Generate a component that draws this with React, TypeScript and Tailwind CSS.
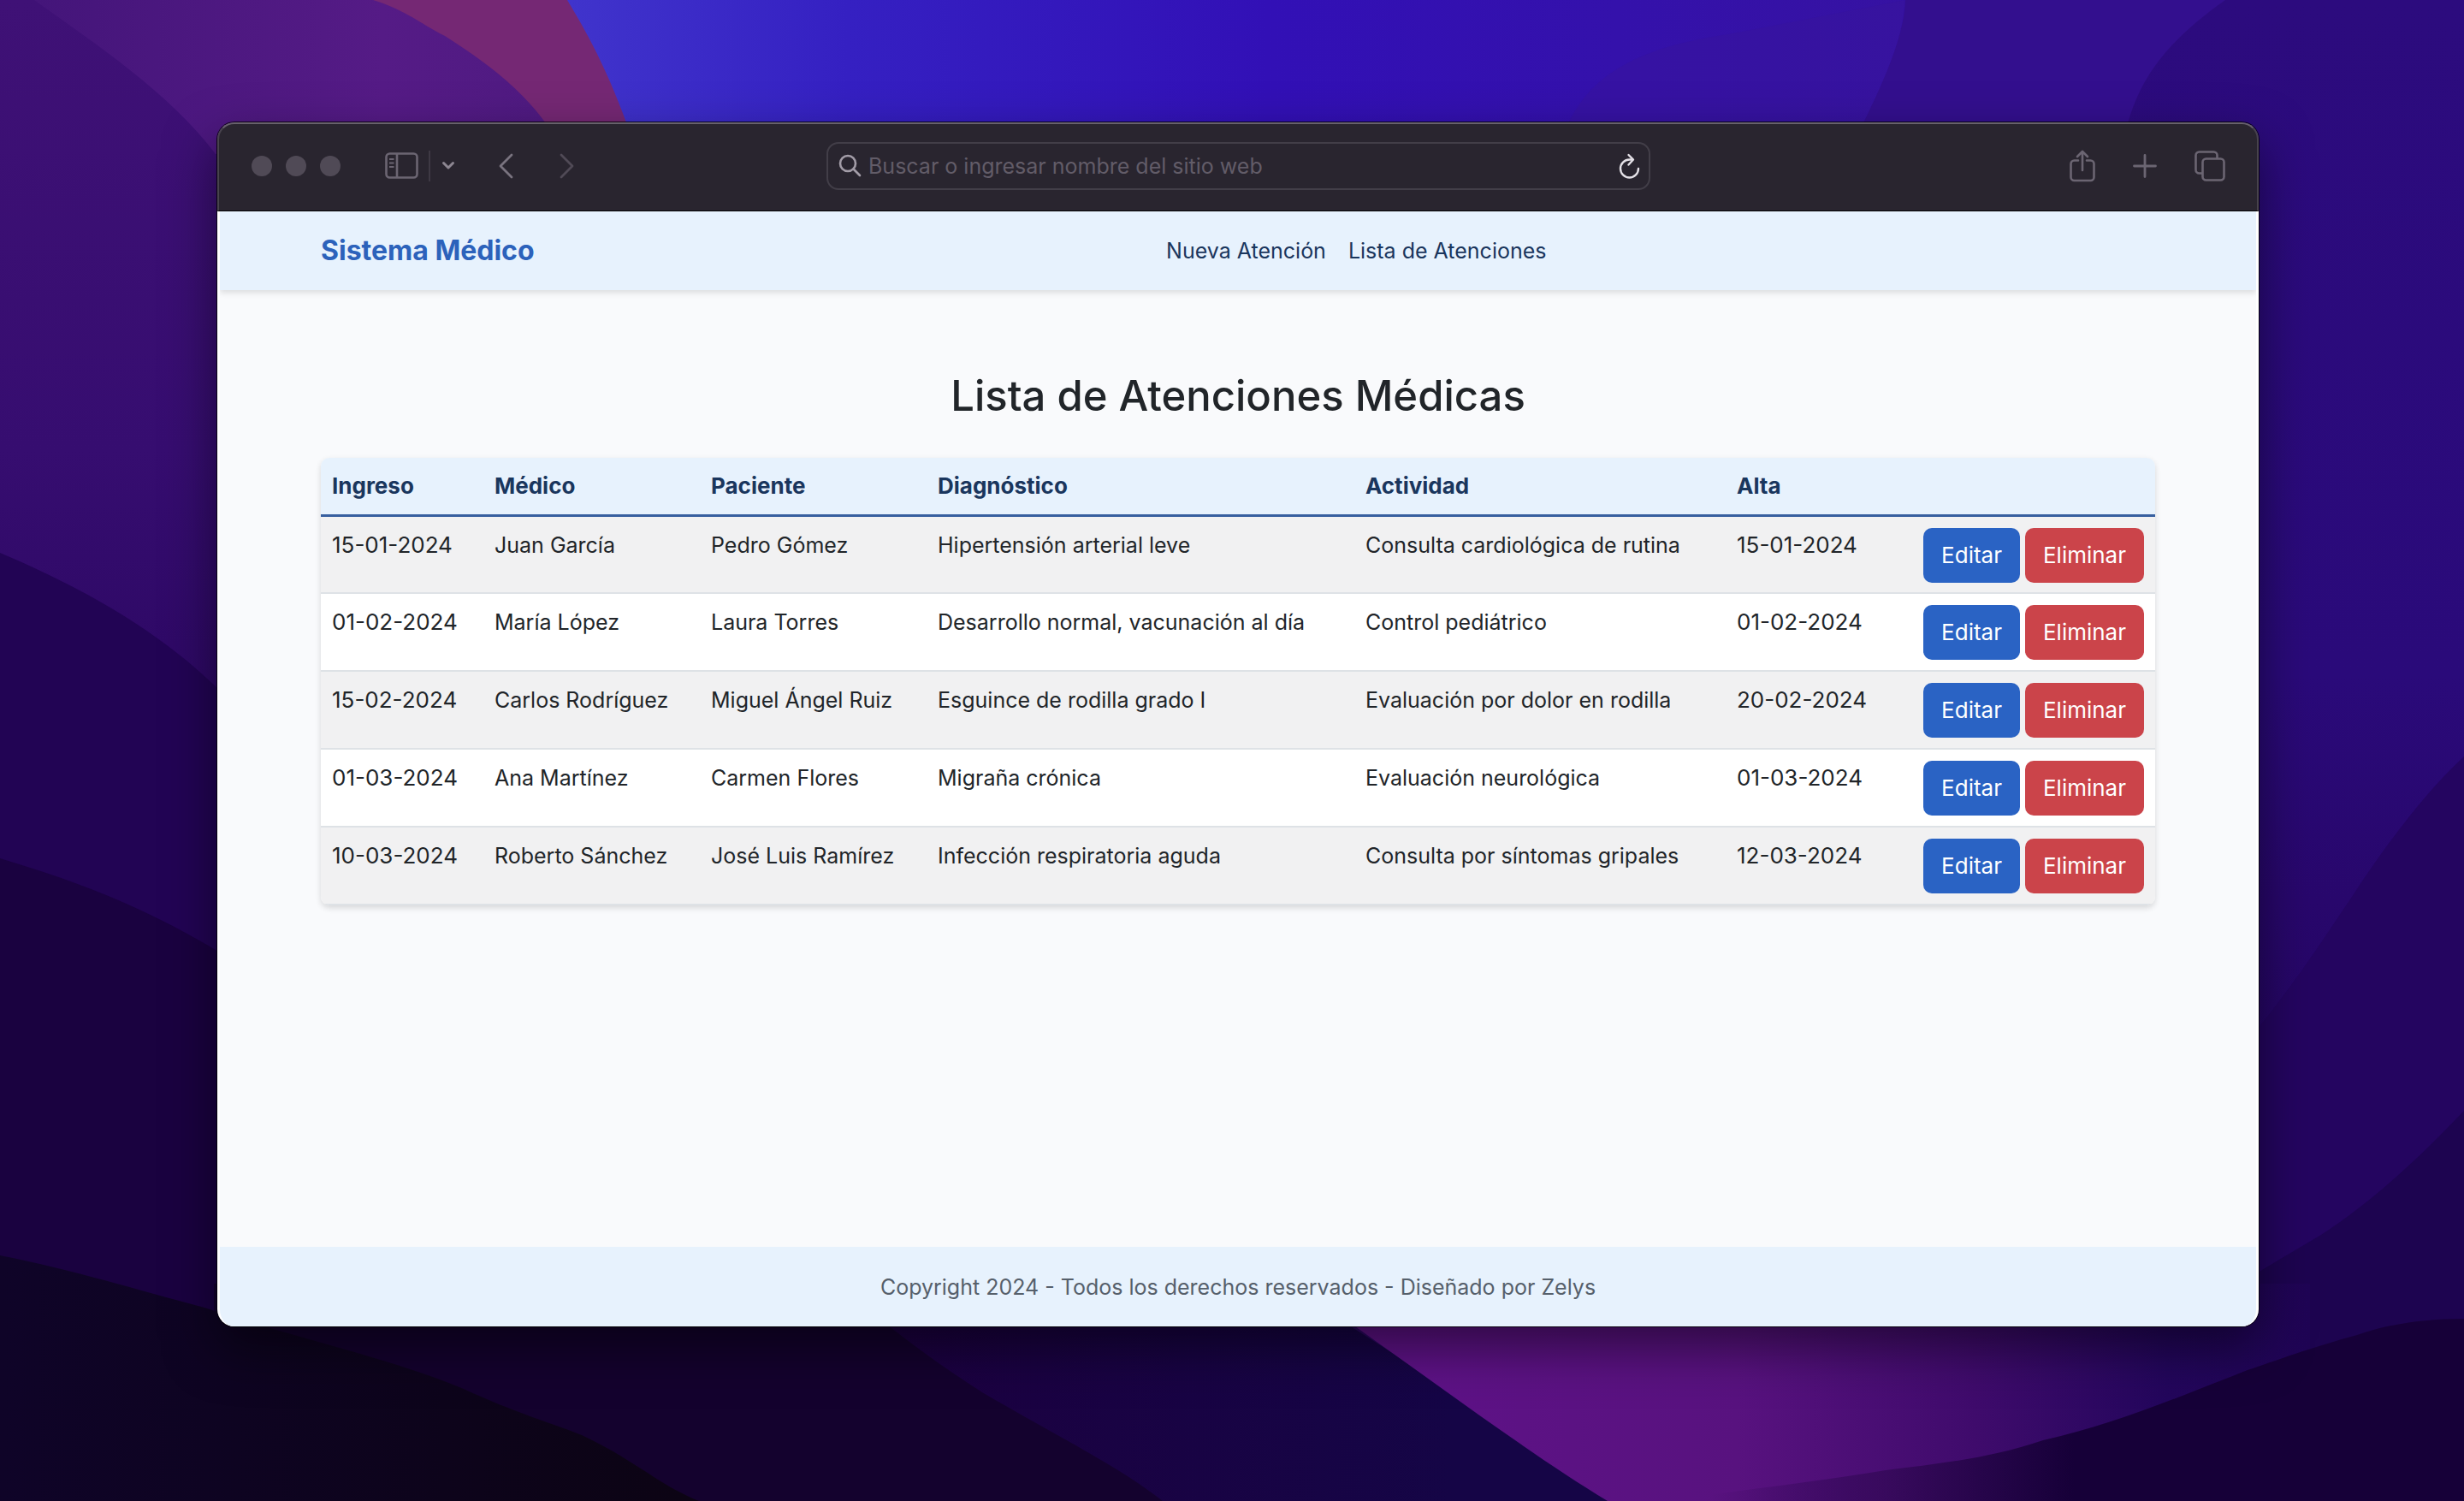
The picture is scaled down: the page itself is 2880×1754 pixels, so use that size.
import React from 'react'

const atenciones = [
  { ingreso: '15-01-2024', medico: 'Juan García', paciente: 'Pedro Gómez', diagnostico: 'Hipertensión arterial leve', actividad: 'Consulta cardiológica de rutina', alta: '15-01-2024' },
  { ingreso: '01-02-2024', medico: 'María López', paciente: 'Laura Torres', diagnostico: 'Desarrollo normal, vacunación al día', actividad: 'Control pediátrico', alta: '01-02-2024' },
  { ingreso: '15-02-2024', medico: 'Carlos Rodríguez', paciente: 'Miguel Ángel Ruiz', diagnostico: 'Esguince de rodilla grado I', actividad: 'Evaluación por dolor en rodilla', alta: '20-02-2024' },
  { ingreso: '01-03-2024', medico: 'Ana Martínez', paciente: 'Carmen Flores', diagnostico: 'Migraña crónica', actividad: 'Evaluación neurológica', alta: '01-03-2024' },
  { ingreso: '10-03-2024', medico: 'Roberto Sánchez', paciente: 'José Luis Ramírez', diagnostico: 'Infección respiratoria aguda', actividad: 'Consulta por síntomas gripales', alta: '12-03-2024' },
]

function Wallpaper() {
  return (
    <svg className="absolute inset-0 h-full w-full" viewBox="0 0 2880 1754" preserveAspectRatio="none" aria-hidden="true">
      <defs>
        <linearGradient id="left" x1="0" y1="0" x2="0" y2="1">
          <stop offset="0" stopColor="#3f1176" />
          <stop offset=".3" stopColor="#360d70" />
          <stop offset=".5" stopColor="#2b0762" />
        </linearGradient>
        <linearGradient id="violet" x1="0" y1="0" x2="1" y2="0">
          <stop offset="0" stopColor="#44157a" />
          <stop offset=".6" stopColor="#551b86" />
          <stop offset="1" stopColor="#4d1a80" />
        </linearGradient>
        <linearGradient id="blue" x1="0" y1="0" x2="1" y2="0">
          <stop offset="0" stopColor="#4034cc" />
          <stop offset=".2" stopColor="#3520c2" />
          <stop offset=".5" stopColor="#3210b6" />
          <stop offset="1" stopColor="#3612a0" />
        </linearGradient>
        <linearGradient id="right" x1="0" y1="0" x2="0" y2="1">
          <stop offset="0" stopColor="#2c0b7e" />
          <stop offset=".45" stopColor="#2a0a7a" />
          <stop offset=".6" stopColor="#28076c" />
          <stop offset="1" stopColor="#1d0450" />
        </linearGradient>
        <linearGradient id="magenta" x1="1584" y1="0" x2="2700" y2="0" gradientUnits="userSpaceOnUse">
          <stop offset="0" stopColor="#5f1288" />
          <stop offset=".4" stopColor="#58127f" />
          <stop offset=".65" stopColor="#3f0b6c" />
          <stop offset=".85" stopColor="#23065c" />
          <stop offset="1" stopColor="#1f0454" />
        </linearGradient>
        <linearGradient id="hill" x1="2000" y1="0" x2="2500" y2="0" gradientUnits="userSpaceOnUse">
          <stop offset="0" stopColor="#160038" stopOpacity="0" />
          <stop offset=".4" stopColor="#280648" stopOpacity=".5" />
          <stop offset=".85" stopColor="#160038" />
        </linearGradient>
        <linearGradient id="navy" x1="900" y1="0" x2="1700" y2="0" gradientUnits="userSpaceOnUse">
          <stop offset="0" stopColor="#1d0040" />
          <stop offset="1" stopColor="#150546" />
        </linearGradient>
        <linearGradient id="night" x1="0" y1="0" x2="800" y2="0" gradientUnits="userSpaceOnUse">
          <stop offset="0" stopColor="#0f0428" />
          <stop offset="1" stopColor="#0c0414" />
        </linearGradient>
      </defs>
      <rect width="2880" height="1754" fill="url(#left)" />
      <path d="M40 0C110 50 200 110 252 180H720V0Z" fill="url(#violet)" />
      <path d="M436 0C475 12 495 30 520 42C580 80 630 120 660 180H760L700 0Z" fill="#752874" />
      <path d="M663 0C690 45 715 90 745 180H2300V0Z" fill="url(#blue)" />
      <path d="M1820 180C1840 110 1880 60 2020 40L2227 0L2200 180Z" fill="#37139c" opacity=".5" />
      <path d="M2227 0C2225 50 2195 110 2160 180H2880V0Z" fill="#330f8e" />
      <path d="M2601 0C2530 50 2490 100 2480 180V1754H2880V0Z" fill="url(#right)" />
      <path d="M2880 884C2830 930 2780 1000 2747 1051C2710 1105 2680 1155 2600 1250V1754H2880Z" fill="#240560" />
      <path d="M2880 1298C2840 1340 2780 1400 2713 1443L2600 1510V1754H2880Z" fill="#1d0450" />
      <path d="M0 646C80 680 180 730 260 810V1754H0Z" fill="#220454" />
      <path d="M0 1003C90 1030 170 1060 260 1115V1754H0Z" fill="#1a0240" />
      <path d="M250 1500H1100L1400 1754H250Z" fill="#14022e" />
      <path d="M980 1500C1030 1545 1090 1590 1148 1627C1230 1675 1310 1715 1359 1754H1900L1500 1500Z" fill="url(#navy)" />
      <path d="M1510 1500L1584 1550C1680 1618 1790 1700 1879 1754H2700V1500Z" fill="url(#magenta)" />
      <path d="M2880 1541C2830 1541 2790 1548 2755 1560C2700 1575 2660 1590 2627 1601C2540 1635 2470 1665 2388 1683C2330 1703 2270 1710 2204 1718C2100 1735 2000 1745 1950 1754H2880Z" fill="url(#hill)" />
      <path d="M0 1467C90 1485 170 1510 239 1528C350 1565 450 1585 542 1623C600 1650 650 1665 680 1677C740 1705 770 1735 817 1754H0Z" fill="url(#night)" />
    </svg>
  )
}

const iconButton = 'flex shrink-0 items-center justify-center text-[#6b6572]'

function Toolbar() {
  return (
    <div className="grid h-[104px] shrink-0 grid-cols-[1fr_963px_1fr] items-center rounded-t-[20px] border-x-2 border-t-2 border-b border-x-[#48434d] border-t-[#67616b] border-b-black bg-[#29252f] pr-[37px] pb-1 pl-[38px]">
      <div className="flex items-center">
        <div className="flex gap-4">
          <span className="size-6 rounded-full bg-[#504a56]" />
          <span className="size-6 rounded-full bg-[#504a56]" />
          <span className="size-6 rounded-full bg-[#504a56]" />
        </div>
        <button type="button" aria-label="Barra lateral" className={`${iconButton} ml-[52px]`}>
          <svg width="39" height="31" viewBox="0 0 39 31" fill="none" stroke="currentColor" strokeWidth="2.6">
            <rect x="1.5" y="1.5" width="36" height="28" rx="4" />
            <path d="M14 1.5v28" />
            <path d="M5 8h5.500M5 12.500h5.500M5 17h5.500" strokeWidth="1.800" />
          </svg>
        </button>
        <span className="ml-3 h-9 w-0.5 bg-[#3e3944]" />
        <button type="button" aria-label="Grupos de pestañas" className={`${iconButton} ml-[13px]`}>
          <svg width="16" height="11" viewBox="0 0 16 11" fill="none" stroke="#8d8792" strokeWidth="3" strokeLinecap="round" strokeLinejoin="round">
            <path d="M2.500 2.500L8 8l5.500-5.500" />
          </svg>
        </button>
        <button type="button" aria-label="Atrás" className={`${iconButton} ml-[50px]`}>
          <svg width="18" height="30" viewBox="0 0 18 30" fill="none" stroke="#79737f" strokeWidth="2.800" strokeLinecap="round" strokeLinejoin="round">
            <path d="M16 2L3 15l13 13" />
          </svg>
        </button>
        <button type="button" aria-label="Adelante" className={`${iconButton} ml-[54px]`}>
          <svg width="18" height="30" viewBox="0 0 18 30" fill="none" stroke="#504a56" strokeWidth="2.800" strokeLinecap="round" strokeLinejoin="round">
            <path d="M2 2l13 13L2 28" />
          </svg>
        </button>
      </div>

      <form className="flex h-14 items-center gap-2 rounded-[14px] border-2 border-[#423e48] pr-2.5 pl-3" onSubmit={(e) => e.preventDefault()}>
        <svg width="27" height="27" viewBox="0 0 27 27" fill="none" stroke="#a39da8" strokeWidth="2.600" strokeLinecap="round" aria-hidden="true">
          <circle cx="11" cy="11" r="9" />
          <path d="M17.500 17.500L25 25" />
        </svg>
        <input type="text" aria-label="Dirección" placeholder="Buscar o ingresar nombre del sitio web" className="min-w-0 flex-1 bg-transparent text-[25px] leading-9 text-white outline-none placeholder:text-[#625c68]" />
        <button type="button" aria-label="Recargar" className="shrink-0">
          <svg width="25" height="30" viewBox="0 0 25 30" fill="none" stroke="#e4e1e7" strokeWidth="2.400" strokeLinecap="round" strokeLinejoin="round">
            <path d="M16 7.500H12.500A10.500 10.500 0 1 0 23 18" />
            <path d="M11.500 2l5.500 5.500-5.500 6" />
          </svg>
        </button>
      </form>

      <div className="flex items-center justify-end gap-11">
        <button type="button" aria-label="Compartir" className={iconButton}>
          <svg width="30" height="38" viewBox="0 0 30 38" fill="none" stroke="currentColor" strokeWidth="2.600" strokeLinecap="round" strokeLinejoin="round">
            <path d="M10 12.500H5.500a4 4 0 0 0-4 4V32a4 4 0 0 0 4 4h19a4 4 0 0 0 4-4V16.500a4 4 0 0 0-4-4H20" />
            <path d="M15 24V2M9 8l6-6 6 6" />
          </svg>
        </button>
        <button type="button" aria-label="Pestaña nueva" className={iconButton}>
          <svg width="28" height="28" viewBox="0 0 28 28" fill="none" stroke="currentColor" strokeWidth="2.800" strokeLinecap="round">
            <path d="M14 1.500v25M1.500 14h25" />
          </svg>
        </button>
        <button type="button" aria-label="Vista de pestañas" className={iconButton}>
          <svg width="36" height="36" viewBox="0 0 36 36" fill="none" stroke="currentColor" strokeWidth="2.600">
            <rect x="9.500" y="9.500" width="25" height="25" rx="4" />
            <path d="M9.500 26.500h-4a4 4 0 0 1-4-4v-17a4 4 0 0 1 4-4h17a4 4 0 0 1 4 4v4" />
          </svg>
        </button>
      </div>
    </div>
  )
}

function Navbar() {
  return (
    <header className="relative flex h-[92px] shrink-0 items-center bg-[#e7f2fd] px-[118px] shadow-[0_3px_7px_rgba(0,0,0,0.12)]">
      <a href="#" className="mr-[27px] text-[32px] leading-10 font-bold text-[#2c62bb]">Sistema Médico</a>
      <nav className="flex flex-1 justify-center gap-[26px] text-[25px] leading-10 text-[#1a365d]">
        <a href="#nueva">Nueva Atención</a>
        <a href="#lista">Lista de Atenciones</a>
      </nav>
    </header>
  )
}

const th = 'px-[13px] text-left text-[26px] font-bold'
const td = 'px-[13px] pt-[13px] align-top'
const date = 'px-[13px] pt-[13px] align-top text-[26px]'
const action = 'h-16 rounded-[10px] px-[21px] text-[26px] text-white'

function TablaAtenciones() {
  return (
    <div className="overflow-hidden rounded-[10px] shadow-[0_3px_7px_rgba(0,0,0,0.14)]">
      <table className="w-full table-fixed text-[25px] leading-10 whitespace-nowrap text-[#212529]">
        <colgroup>
          <col className="w-[190px]" />
          <col className="w-[253px]" />
          <col className="w-[265px]" />
          <col className="w-[500px]" />
          <col className="w-[434px]" />
          <col className="w-[218px]" />
          <col className="w-[284px]" />
        </colgroup>
        <thead>
          <tr className="h-[67px] border-b-[3px] border-[#375f9f] bg-[#e7f2fd] text-[#1a365d]">
            <th scope="col" className={th}>Ingreso</th>
            <th scope="col" className={th}>Médico</th>
            <th scope="col" className={th}>Paciente</th>
            <th scope="col" className={th}>Diagnóstico</th>
            <th scope="col" className={th}>Actividad</th>
            <th scope="col" className={th}>Alta</th>
            <td />
          </tr>
        </thead>
        <tbody>
          {atenciones.map((a) => (
            <tr key={a.ingreso} className="h-[91px] border-b-2 border-[#dee2e6] bg-white odd:bg-[#f1f1f2]">
              <td className={date}>{a.ingreso}</td>
              <td className={td}>{a.medico}</td>
              <td className={td}>{a.paciente}</td>
              <td className={td}>{a.diagnostico}</td>
              <td className={td}>{a.actividad}</td>
              <td className={date}>{a.alta}</td>
              <td className={td}>
                <div className="flex justify-end gap-1.5">
                  <button type="button" className={`${action} bg-[#2a63c4]`}>Editar</button>
                  <button type="button" className={`${action} bg-[#cb444a]`}>Eliminar</button>
                </div>
              </td>
            </tr>
          ))}
        </tbody>
      </table>
    </div>
  )
}

export default function App() {
  return (
    <div className="relative flex min-h-screen flex-col overflow-hidden bg-[#2b0762] pt-[143px] pr-[240px] pb-[204px] pl-[254px] font-['Inter',sans-serif]">
      <Wallpaper />
      <div className="relative flex flex-1 flex-col rounded-[20px] shadow-[0_0_0_1px_rgba(0,0,0,0.8),0_24px_60px_rgba(0,0,0,0.5)]">
        <Toolbar />
        <div className="flex flex-1 flex-col overflow-hidden rounded-b-[20px] border-x-[3px] border-white bg-[#f9fafc]">
          <Navbar />
          <main className="flex-1 px-[118px] pt-[92px]">
            <h1 className="mb-[40px] text-center text-[49px] leading-[64px] font-medium text-[#212529]">Lista de Atenciones Médicas</h1>
            <TablaAtenciones />
          </main>
          <footer className="flex h-[93px] shrink-0 items-center justify-center bg-[#e7f2fd] text-[25px] leading-10 text-[#56606b]">
            Copyright 2024 - Todos los derechos reservados - Diseñado por Zelys
          </footer>
        </div>
      </div>
    </div>
  )
}
